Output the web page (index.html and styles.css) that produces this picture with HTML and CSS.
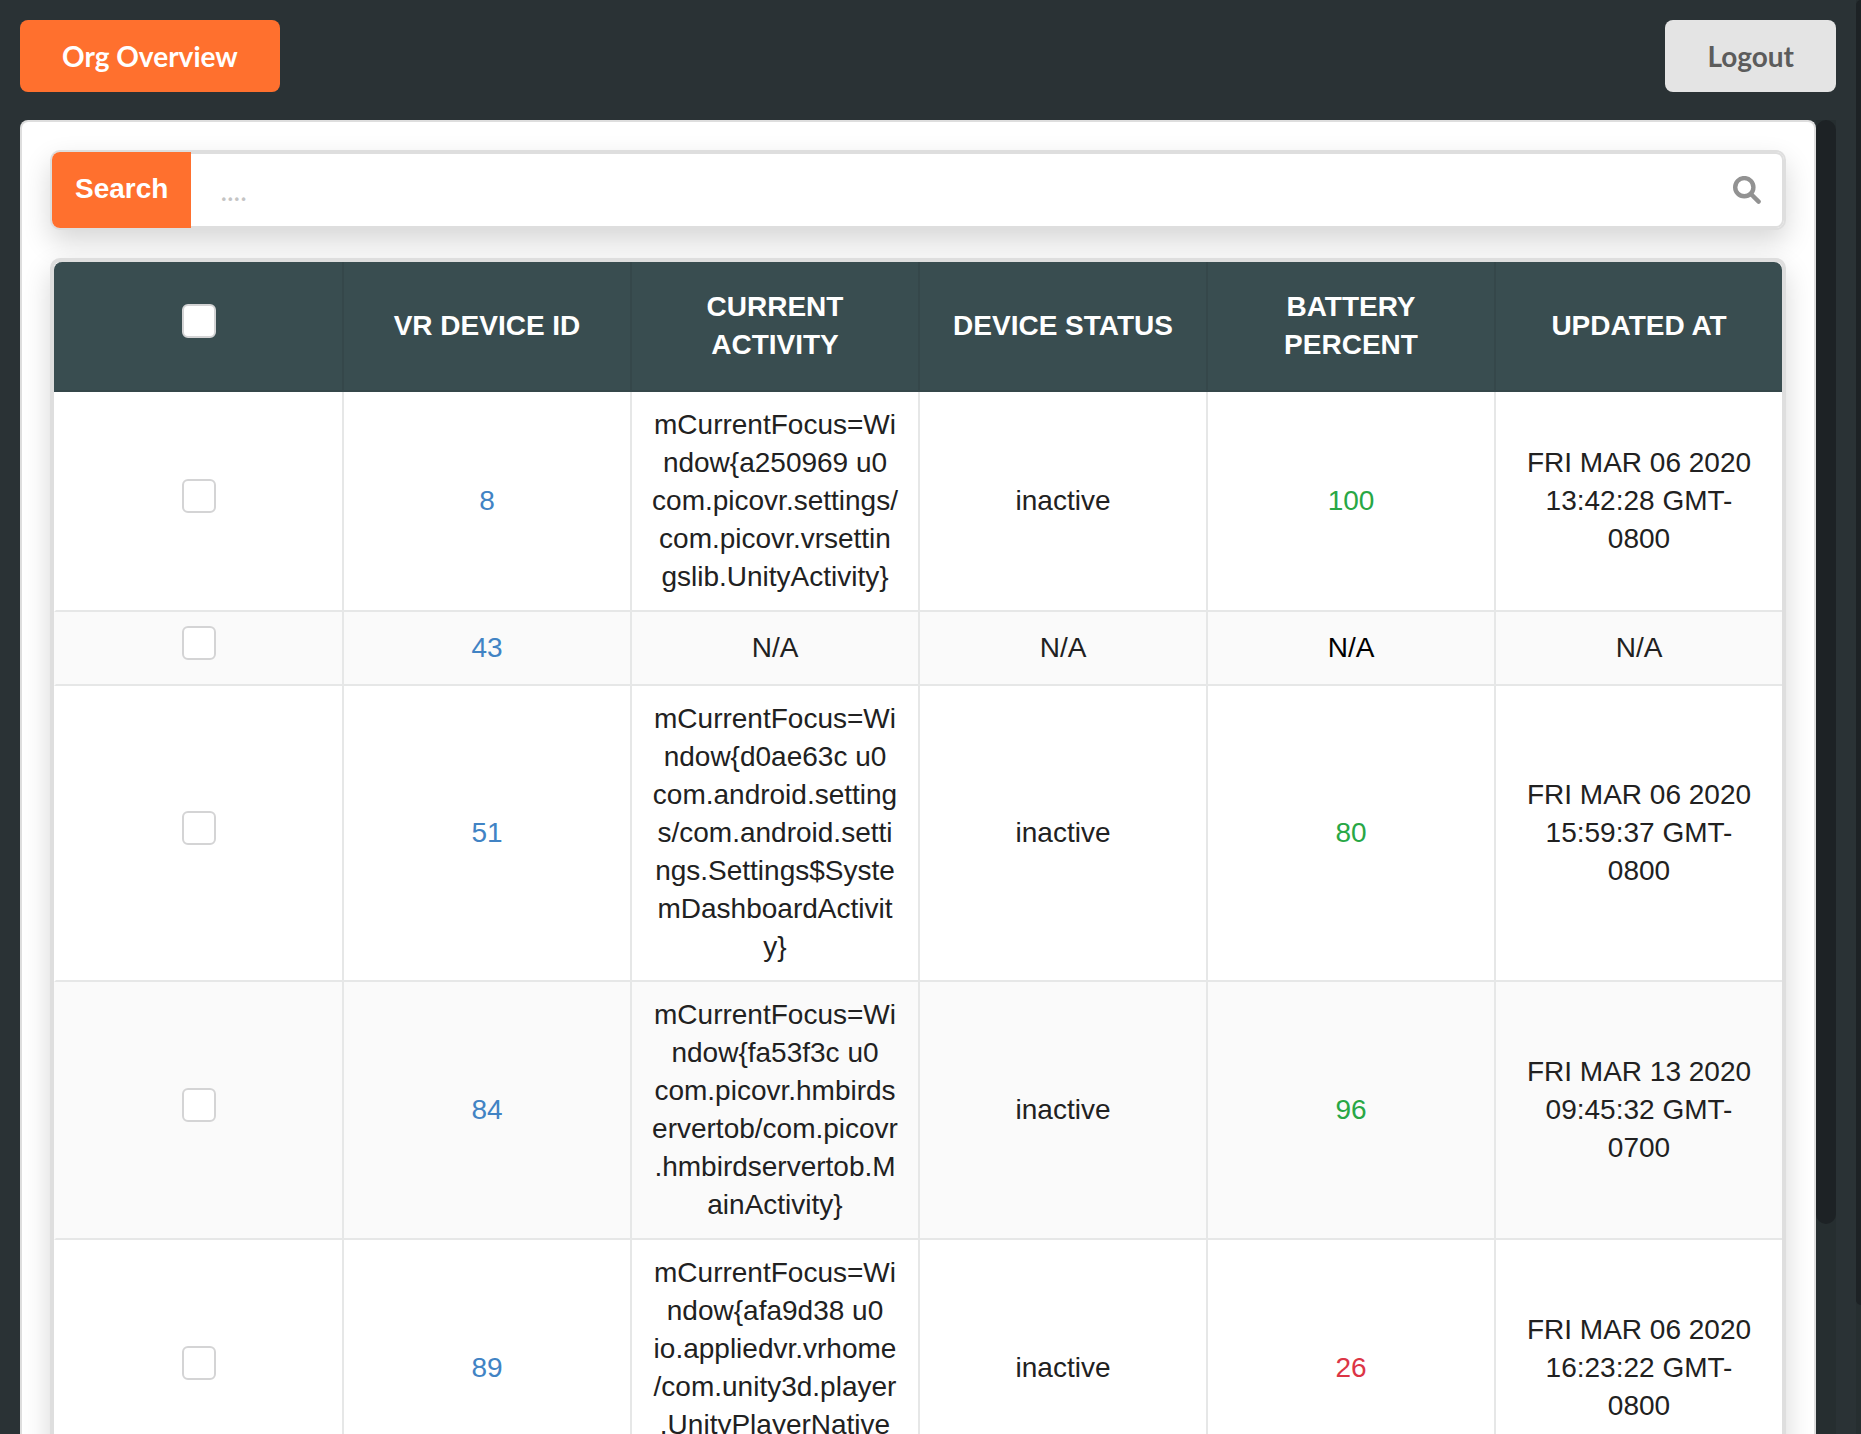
FILE: index.html
```
<!DOCTYPE html>
<html lang="en">
<head>
<meta charset="utf-8">
<meta name="viewport" content="width=device-width, initial-scale=1">
<title>Org Overview</title>
<link rel="stylesheet" href="styles.css">
</head>
<body>
<div class="app">
  <div class="page">
    <header class="topbar">
      <button type="button" class="btn btn-primary">Org Overview</button>
      <button type="button" class="btn btn-default">Logout</button>
    </header>
    <div class="scroller">
      <main class="panel">
        <form class="search" role="search">
          <label class="search-label" for="search">Search</label>
          <div class="search-field">
            <input class="search-input" id="search" type="text" placeholder="....">
            <svg class="search-icon" viewBox="0 0 28 28" aria-hidden="true"><circle cx="11.3" cy="11.2" r="9.1"/><path d="M18.2 18.2L25.6 25.6"/></svg>
          </div>
        </form>
        <div class="table-frame">
          <table class="devices">
            <thead>
              <tr>
                <th><input class="check" type="checkbox" aria-label="Select all devices"></th>
                <th>VR Device ID</th>
                <th>Current Activity</th>
                <th>Device Status</th>
                <th>Battery Percent</th>
                <th>Updated At</th>
              </tr>
            </thead>
            <tbody>
              <tr>
                <td><input class="check" type="checkbox" aria-label="Select device 8"></td>
                <td><a href="#8">8</a></td>
                <td>mCurrentFocus=Window{a250969 u0 com.picovr.settings/com.picovr.vrsettingslib.UnityActivity}</td>
                <td>inactive</td>
                <td class="battery-ok">100</td>
                <td class="date">Fri Mar 06 2020 13:42:28 GMT-0800</td>
              </tr>
              <tr>
                <td><input class="check" type="checkbox" aria-label="Select device 43"></td>
                <td><a href="#43">43</a></td>
                <td>N/A</td>
                <td>N/A</td>
                <td class="battery-none">N/A</td>
                <td class="date">N/A</td>
              </tr>
              <tr>
                <td><input class="check" type="checkbox" aria-label="Select device 51"></td>
                <td><a href="#51">51</a></td>
                <td>mCurrentFocus=Window{d0ae63c u0 com.android.settings/com.android.settings.Settings$SystemDashboardActivity}</td>
                <td>inactive</td>
                <td class="battery-ok">80</td>
                <td class="date">Fri Mar 06 2020 15:59:37 GMT-0800</td>
              </tr>
              <tr>
                <td><input class="check" type="checkbox" aria-label="Select device 84"></td>
                <td><a href="#84">84</a></td>
                <td>mCurrentFocus=Window{fa53f3c u0 com.picovr.hmbirdservertob/com.picovr.hmbirdservertob.MainActivity}</td>
                <td>inactive</td>
                <td class="battery-ok">96</td>
                <td class="date">Fri Mar 13 2020 09:45:32 GMT-0700</td>
              </tr>
              <tr>
                <td><input class="check" type="checkbox" aria-label="Select device 89"></td>
                <td><a href="#89">89</a></td>
                <td>mCurrentFocus=Window{afa9d38 u0 io.appliedvr.vrhome/com.unity3d.player.UnityPlayerNativeActivity}</td>
                <td>inactive</td>
                <td class="battery-low">26</td>
                <td class="date">Fri Mar 06 2020 16:23:22 GMT-0800</td>
              </tr>
            </tbody>
          </table>
        </div>
      </main>
      <div class="track"><div class="thumb"></div></div>
    </div>
  </div>
  <div class="page-track"><div class="page-thumb"></div></div>
</div>
</body>
</html>
```
FILE: styles.css
```
* {
  box-sizing: border-box;
}

body {
  margin: 0;
  background: #2a3235;
  color: #212121;
  font: 28px/38px "Liberation Sans", Arial, sans-serif;
}

.app {
  display: flex;
  height: 100vh;
  overflow: hidden;
}

.page {
  flex: 1;
  min-width: 0;
  display: flex;
  flex-direction: column;
  gap: 28px;
  padding: 20px 20px 0;
}

/* Top bar */

.topbar {
  display: flex;
  justify-content: space-between;
}

.btn {
  height: 72px;
  padding: 0 42px;
  border: 0;
  border-radius: 8px;
  font: bold 28px/38px Lato, sans-serif;
  cursor: pointer;
}

.btn-primary {
  background: #ff702e;
  color: #fff;
}

.btn-default {
  background: #e4e4e4;
  color: #5c5c5c;
}

/* Scrolling area and its bars */

.scroller {
  flex: 1;
  min-height: 0;
  display: flex;
}

.track {
  width: 20px;
  background: #262e30;
}

.thumb {
  height: 84%;
  border-radius: 10px;
  background: #1d2225;
}

.page-track {
  width: 5px;
  background: #262e30;
}

.page-thumb {
  height: 91%;
  border-radius: 10px 0 0 10px;
  background: #1d2225;
}

.panel {
  flex: 1;
  min-width: 0;
  padding: 28px;
  border: 2px solid #dedede;
  border-bottom: 0;
  border-radius: 8px 8px 0 0;
  background: #fff;
  overflow: hidden;
}

/* Search */

.search {
  display: flex;
  height: 80px;
  margin-bottom: 28px;
  border: 2px solid #dedede;
  border-radius: 10px;
  background: #fff;
  box-shadow: 0 12px 28px rgba(0, 0, 0, 0.16);
}

.search-label {
  display: flex;
  align-items: center;
  padding: 0 23px 2px;
  border-radius: 8px 0 0 8px;
  background: #ff702e;
  color: #fff;
  font-weight: bold;
}

.search-field {
  flex: 1;
  display: flex;
  align-items: center;
  padding: 0 21px 0 29px;
  border: 2px solid #dedede;
  border-left: 0;
  border-radius: 0 8px 8px 0;
}

.search-input {
  flex: 1;
  min-width: 0;
  padding: 0;
  border: 0;
  outline: 0;
  background: none;
  color: #212121;
  font: 28px/38px Lato, sans-serif;
}

.search-input::placeholder {
  color: #c4c4c4;
}

.search-icon {
  width: 28px;
  height: 28px;
  fill: none;
  stroke: #929292;
  stroke-width: 4.4;
  stroke-linecap: round;
}

/* Device table */

.table-frame {
  border: 4px solid #dedede;
  border-radius: 10px;
  box-shadow: 0 12px 28px rgba(0, 0, 0, 0.16);
  background: #fff;
}

.devices {
  width: 100%;
  table-layout: fixed;
  border-collapse: separate;
  border-spacing: 0;
  text-align: center;
}

.devices th {
  padding: 26px 20px;
  border-bottom: 2px solid #35474a;
  border-left: 2px solid #35474a;
  background: #394d50;
  color: #fff;
  text-transform: uppercase;
}

.devices th:first-child {
  border-top-left-radius: 8px;
  border-left-color: #394d50;
}

.devices th:last-child {
  border-top-right-radius: 8px;
}

.devices td {
  padding: 14px 20px;
  border-bottom: 2px solid #e6e7e7;
  border-left: 2px solid #e6e7e7;
  word-break: break-word;
}

.devices td:first-child {
  border-left-color: transparent;
}

.devices tbody tr:nth-child(even) {
  background: #fafafa;
}

.devices a {
  color: #4183c4;
  text-decoration: none;
}

.devices .battery-ok {
  color: #28a745;
}

.devices .battery-low {
  color: #dc3545;
}

.devices .battery-none {
  color: #000;
}

.date {
  text-transform: uppercase;
}

.check {
  appearance: none;
  display: block;
  width: 34px;
  height: 34px;
  margin: 0 auto 10px;
  border: 2px solid #d4d4d5;
  border-radius: 6px;
  background: #fff;
}

.check:checked {
  background: #ff702e;
}
```
